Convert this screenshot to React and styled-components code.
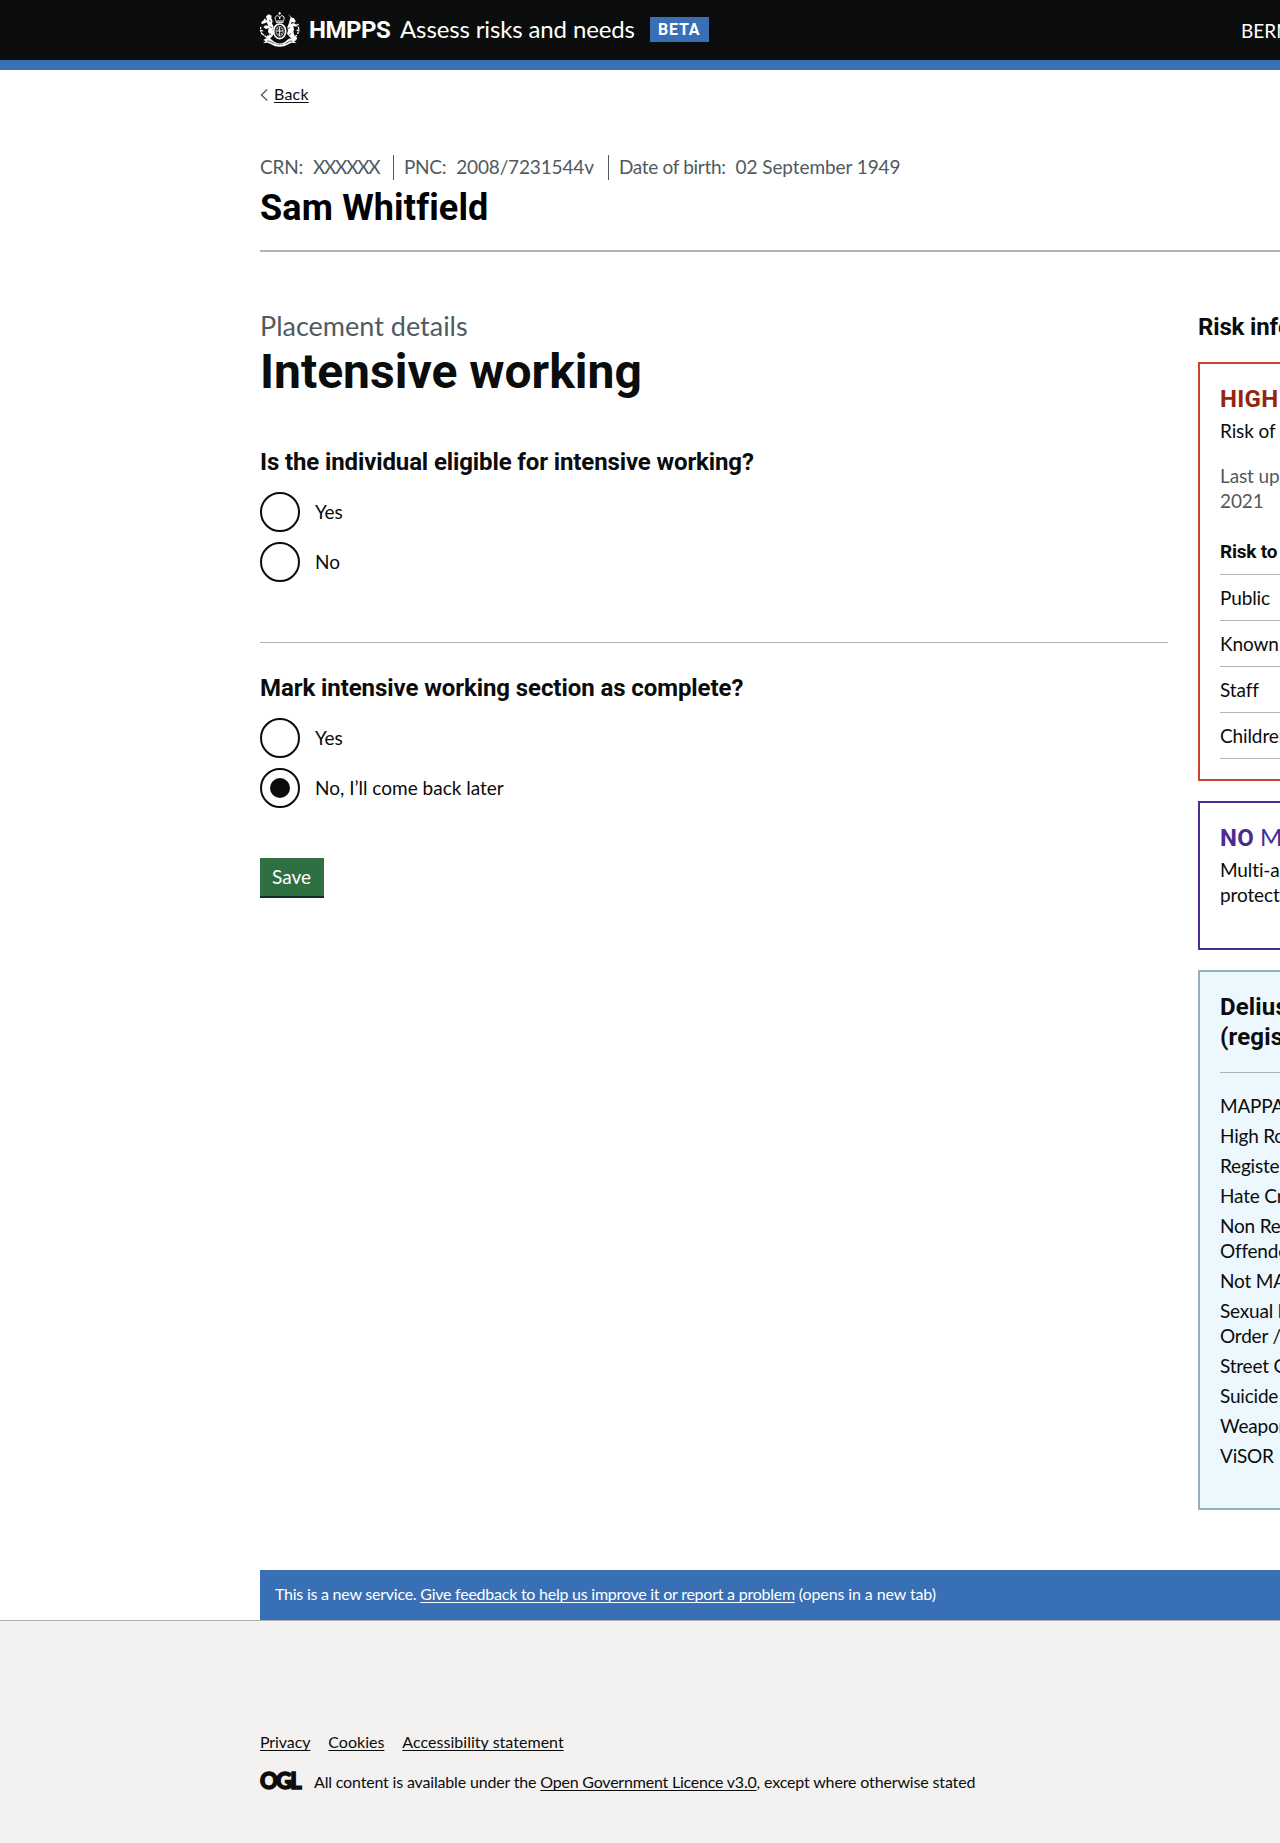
import React, { useState } from "react";
import styled, { createGlobalStyle, css } from "styled-components";

const black = "#0b0c0c";
const blue = "#386fb5";
const grey = "#505a5f";
const rule = "#b1b4b6";
const bodyFont = `Lato, "Liberation Sans", sans-serif`;
const boldFont = `Roboto, "Liberation Sans", sans-serif`;

const GlobalStyle = createGlobalStyle`
  *, *::before, *::after { box-sizing: border-box; }
  html { background: #f3f2f1; }
  body { margin: 0; color: ${black}; background: #fff; font-family: ${bodyFont}; font-variant-ligatures: none; }
  h1, h2, h3, p, ul, dl, fieldset, legend { margin: 0; padding: 0; border: 0; font-weight: inherit; }
`;

const strong = css`
  font-family: ${boldFont};
  font-weight: 700;
`;

const Page = styled.div`
  display: flex;
  flex-direction: column;
  height: 1843px;
  overflow: hidden;
`;

const Container = styled.div`
  width: 1400px;
  margin-left: 260px;
  flex: none;
`;

const Txt = styled.span`
  letter-spacing: ${(p) => p.$ls || 0}px;
  white-space: pre;
`;

const Link = styled.a`
  color: inherit;
  letter-spacing: ${(p) => p.$ls || 0}px;
  text-decoration: underline;
  text-decoration-thickness: 1px;
  text-underline-offset: 2px;
  text-decoration-skip-ink: none;
  white-space: pre;
`;

const Header = styled.header`
  height: 70px;
  flex: none;
  background: ${black};
  border-bottom: 10px solid ${blue};
  color: #fff;
`;

const HeaderRow = styled(Container)`
  display: flex;
  align-items: center;
  height: 59px;
`;

const Crest = styled.svg`
  width: 40px;
  height: 35px;
  margin-right: 9px;
`;

const Organisation = styled.span`
  ${strong}
  font-size: 24px;
  line-height: 30px;
  letter-spacing: -0.5px;
  width: 91px;
`;

const Service = styled.span`
  font-size: 24px;
  line-height: 30px;
  letter-spacing: -0.13px;
  width: 250px;
  white-space: nowrap;
  margin-top: -1px;
`;

const Tag = styled.span`
  ${strong}
  font-size: 16px;
  line-height: 25px;
  letter-spacing: 0.8px;
  width: 59px;
  padding-left: 8px;
  background: ${blue};
`;

const User = styled.span`
  margin-left: 532px;
  margin-top: 1px;
  font-size: 19px;
  line-height: 25px;
  white-space: nowrap;
`;

const BackLink = styled.div`
  display: flex;
  align-items: center;
  gap: 6px;
  margin-top: 14px;
  font-size: 16px;
  line-height: 20px;
`;

const Chevron = styled.svg`
  width: 8px;
  height: 12px;
  margin-top: 2px;
`;

const Identity = styled.dl`
  display: flex;
  height: 25px;
  margin-top: 51px;
  color: ${grey};
  font-size: 19px;
  line-height: 24px;
`;

const IdentityItem = styled.div`
  display: flex;
  gap: ${(p) => p.$gap || 10}px;
  margin-right: ${(p) => (p.$last ? 0 : 10)}px;
  border-right: ${(p) => (p.$last ? 0 : 1)}px solid ${grey};
  width: ${(p) => p.$width}px;
`;

const PersonName = styled.h2`
  ${strong}
  margin-top: 8px;
  padding-bottom: 22px;
  border-bottom: 2px solid ${rule};
  color: #000;
  font-size: 36px;
  line-height: 40px;
  letter-spacing: 0.15px;
`;

const Columns = styled(Container)`
  display: grid;
  grid-template-columns: 908px 462px;
  column-gap: 30px;
  height: 1318px;
  align-items: start;
`;

const Main = styled.main`
  padding-top: 59px;
`;

const Caption = styled.p`
  color: ${grey};
  font-size: 27px;
  line-height: 30px;
`;

const Title = styled.h1`
  ${strong}
  margin-top: 6px;
  font-size: 48px;
  line-height: 50px;
`;

const Fieldset = styled.fieldset`
  display: flex;
  flex-direction: column;
  gap: 10px;
  min-width: 0;
`;

const Legend = styled.h3`
  ${strong}
  margin-bottom: 5px;
  font-size: 24px;
  line-height: 30px;
  letter-spacing: ${(p) => p.$ls}px;
`;

const FirstQuestion = styled.div`
  margin-top: 50px;
  padding-bottom: 60px;
  border-bottom: 1px solid ${rule};
`;

const SecondQuestion = styled.div`
  margin-top: 30px;
`;

const Option = styled.label`
  display: flex;
  align-items: center;
  gap: 15px;
  height: 40px;
  font-size: 19px;
  line-height: 25px;

  span {
    padding-bottom: 2px;
  }
`;

const Radio = styled.input`
  appearance: none;
  display: grid;
  place-items: center;
  width: 40px;
  height: 40px;
  margin: 0;
  border: 2px solid ${black};
  border-radius: 50%;
  background: #fff;

  &:checked::after {
    content: "";
    width: 20px;
    height: 20px;
    border-radius: 50%;
    background: ${black};
  }
`;

const SaveButton = styled.button`
  width: 64px;
  height: 38px;
  margin-top: 50px;
  padding: 0 1px 2px 0;
  border: 0;
  background: #2f7042;
  box-shadow: 0 2px 0 #122f1c;
  color: #fff;
  font: 400 19px/25px ${bodyFont};
`;

const Aside = styled.aside`
  display: flex;
  flex-direction: column;
  gap: 20px;
  padding-top: 60px;
  white-space: nowrap;
`;

const AsideTitle = styled.h2`
  ${strong}
  font-size: 24px;
  line-height: 30px;
  letter-spacing: -0.15px;
`;

const Widget = styled.section`
  height: ${(p) => p.$height}px;
  padding: 20px;
  border: 2px solid ${(p) => p.$color};
  background: ${(p) => p.$background || "#fff"};
  font-size: 19px;
  line-height: 25px;
  letter-spacing: -0.12px;
`;

const Level = styled.h3`
  margin: -1px 0 4px;
  color: ${(p) => p.$color};
  font-size: 24px;
  line-height: 30px;

  strong {
    ${strong}
    letter-spacing: 0.3px;
  }
`;

const Updated = styled.p`
  margin-top: 20px;
  color: ${grey};
`;

const RiskHead = styled.p`
  ${strong}
  margin-top: 26px;
  padding-bottom: 10px;
  border-bottom: 1px solid ${rule};
  letter-spacing: -0.2px;
`;

const RiskRow = styled.p`
  height: 46px;
  padding: 10px 0;
  border-bottom: 1px solid ${rule};
`;

const FlagsTitle = styled.h3`
  ${strong}
  padding-bottom: 20px;
  border-bottom: 1px solid ${rule};
  font-size: 24px;
  line-height: 30px;
  letter-spacing: 0.15px;
`;

const Flags = styled.ul`
  display: flex;
  flex-direction: column;
  gap: 5px;
  margin-top: 20px;
  list-style: none;
  letter-spacing: -0.2px;
`;

const Feedback = styled(Container)`
  height: 50px;
  padding: 14px 15px;
  background: ${blue};
  color: #fff;
  font-size: 16px;
  line-height: 20px;
  white-space: nowrap;
`;

const Footer = styled.footer`
  flex: 1;
  padding-top: 111px;
  border-top: 1px solid ${rule};
  background: #f3f2f1;
  font-size: 16px;
  line-height: 20px;
`;

const FooterLinks = styled.nav`
  display: flex;
  gap: 18px;
`;

const Licence = styled.div`
  display: flex;
  align-items: center;
  height: 20px;
  margin-top: 20px;
  white-space: nowrap;
`;

const OglMark = styled.span`
  width: 54px;
  margin-top: -3px;
  font-size: 22px;
  font-weight: 900;
  letter-spacing: -1.8px;
  -webkit-text-stroke: 1.4px ${black};
`;

function RoyalArms() {
  return (
    <Crest viewBox="0 0 120 105" fill="none" stroke="#fff" aria-hidden="true">
      <g strokeWidth="3">
        <path d="M59 0v9M55 4h8" />
        <path d="M47 25c-4-8 0-14 6-14 3 0 6 4 6 10 0-6 3-10 6-10 6 0 10 6 6 14" />
        <path d="M46 27h26M48 31h22" />
      </g>
      <ellipse cx="59" cy="58" rx="18" ry="22" strokeWidth="5" />
      <ellipse cx="59" cy="58" rx="11" ry="15" strokeWidth="2" />
      <path d="M59 44v28M49 57h20M53 49l2 4M64 49l3 3M53 64l3 4M64 64l2 4" strokeWidth="3" />
      <path d="M18 13l8-6 9 4-1 8 4 8-2 8 5 9-3 11 4 10-5 8-8 8-13-2 5-8 8-2-5-10 2-11-8 3-8-5 6-6 9 1-5-10-9 4-7-5 8-6 9 1z" fill="#fff" stroke="none" />
      <path d="M7 66C0 58 0 49 4 43M9 35L3 31M17 21l-5 2M7 66l12 9M3 55l8 2" strokeWidth="4" strokeDasharray="6 2" />
      <path d="M85 6l9 10 8 3 5 8-2 5-9-2-5 7 9-4 12 6-3 5-9-2 2 10-2 8 4 11 8 7-3 5-13-2-9-8-6-8 3-9-2-11 4-9 2-10 4-9z" fill="#fff" stroke="none" />
      <path d="M112 66c6-9 6-16 1-24M116 39l-6-3M111 70l-9 5M116 54l-8 2" strokeWidth="4" strokeDasharray="6 2" />
      <path d="M27 25l6 3M29 44l7 3M91 27l-5 5M90 46l-6 5M28 64l6 5M93 64l-7 6" stroke={black} strokeWidth="2" />
      <path d="M10 84c10-8 20-7 29 2 12 11 29 11 40 0 9-9 20-10 31-2l-8 4 7 6c-10-3-17-3-24 3-15 10-36 10-52 0-7-6-14-6-24-3l8-6z" fill="#fff" stroke="none" />
      <path d="M22 87c10-1 12 5 21 8M97 87c-10-1-13 5-21 8" stroke={black} strokeWidth="2" />
      <path d="M47 95c8 4 17 4 25 0" stroke={black} strokeWidth="2" strokeDasharray="3 2" />
    </Crest>
  );
}

function Question({ name, legend, ls, options, initial }) {
  const [value, setValue] = useState(initial);
  return (
    <Fieldset>
      <Legend $ls={ls}>{legend}</Legend>
      {options.map((o) => (
        <Option key={o}>
          <Radio type="radio" name={name} checked={value === o} onChange={() => setValue(o)} />
          <Txt $ls={o === "Yes" ? -0.2 : 0}>{o}</Txt>
        </Option>
      ))}
    </Fieldset>
  );
}

const flags = [
  ["MAPPA"],
  ["High RoSH"],
  ["Registered"],
  ["Hate Crime"],
  ["Non Registered", "Offender"],
  ["Not MAPPA"],
  ["Sexual Harm", "Order / Notification"],
  ["Street Gangs"],
  ["Suicide"],
  ["Weapons"],
  ["ViSOR"],
];

export default function App() {
  return (
    <>
      <GlobalStyle />
      <Page>
        <Header>
          <HeaderRow>
            <RoyalArms />
            <Organisation>HMPPS</Organisation>
            <Service>Assess risks and needs</Service>
            <Tag>BETA</Tag>
            <User>BERNARD BEAKS</User>
          </HeaderRow>
        </Header>

        <Container>
          <BackLink>
            <Chevron viewBox="0 0 8 12" fill="none" stroke={grey} strokeWidth="1.3">
              <path d="M7.2 0.6L1.4 6L7.2 11.4" />
            </Chevron>
            <Link href="#" $ls={0.2}>Back</Link>
          </BackLink>
          <Identity>
            <IdentityItem $width={134}>
              <Txt $ls={-0.2}>CRN:</Txt>
              <Txt $ls={-1.3}>XXXXXX</Txt>
            </IdentityItem>
            <IdentityItem $width={205}>
              <Txt $ls={-0.3}>PNC:</Txt>
              <Txt $ls={-0.15}>2008/7231544v</Txt>
            </IdentityItem>
            <IdentityItem $width={300} $last>
              <Txt $ls={-0.33}>Date of birth:</Txt>
              <Txt $ls={-0.08}>02 September 1949</Txt>
            </IdentityItem>
          </Identity>
          <PersonName>Sam Whitfield</PersonName>
        </Container>

        <Columns>
          <Main>
            <Caption>Placement details</Caption>
            <Title>Intensive working</Title>
            <FirstQuestion>
              <Question
                name="eligible"
                legend="Is the individual eligible for intensive working?"
                ls={-0.12}
                options={["Yes", "No"]}
              />
            </FirstQuestion>
            <SecondQuestion>
              <Question
                name="complete"
                legend="Mark intensive working section as complete?"
                ls={-0.08}
                options={["Yes", "No, I’ll come back later"]}
                initial="No, I’ll come back later"
              />
            </SecondQuestion>
            <SaveButton type="button">Save</SaveButton>
          </Main>

          <Aside>
            <AsideTitle>Risk information</AsideTitle>
            <Widget $height={419} $color="#c7432b">
              <Level $color="#942514">
                <strong>HIGH</strong> RoSH
              </Level>
              <p>Risk of serious harm</p>
              <Updated>
                Last updated: October
                <br />
                2021
              </Updated>
              <RiskHead>Risk to</RiskHead>
              <RiskRow>Public</RiskRow>
              <RiskRow>Known adult</RiskRow>
              <RiskRow>Staff</RiskRow>
              <RiskRow>Children</RiskRow>
            </Widget>
            <Widget $height={149} $color="#4c2c92">
              <Level $color="#4c2c92">
                <strong>NO</strong> MAPPA
              </Level>
              <p>
                Multi-agency public
                <br />
                protection arrangements
              </p>
            </Widget>
            <Widget $height={540} $color="#95afc5" $background="#ecf7fe">
              <FlagsTitle>
                Delius flags
                <br />
                (registers)
              </FlagsTitle>
              <Flags>
                {flags.map((lines) => (
                  <li key={lines[0]}>
                    {lines.map((line) => (
                      <div key={line}>{line}</div>
                    ))}
                  </li>
                ))}
              </Flags>
            </Widget>
          </Aside>
        </Columns>

        <Feedback>
          <Txt $ls={-0.24}>This is a new service. </Txt>
          <Link href="#" $ls={-0.24}>Give feedback to help us improve it or report a problem</Link>
          <Txt $ls={-0.11}> (opens in a new tab)</Txt>
        </Feedback>
        <Footer>
          <Container>
            <FooterLinks>
              <Link href="#" $ls={-0.1}>Privacy</Link>
              <Link href="#">Cookies</Link>
              <Link href="#" $ls={0.03}>Accessibility statement</Link>
            </FooterLinks>
            <Licence>
              <OglMark>OGL</OglMark>
              <Txt $ls={-0.17}>All content is available under the </Txt>
              <Link href="#" $ls={-0.21}>Open Government Licence v3.0</Link>
              <Txt $ls={-0.15}>, except where otherwise stated</Txt>
            </Licence>
          </Container>
        </Footer>
      </Page>
    </>
  );
}
